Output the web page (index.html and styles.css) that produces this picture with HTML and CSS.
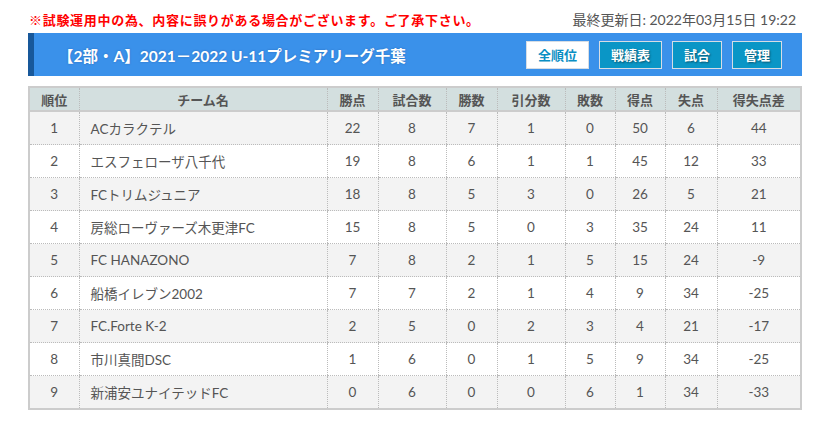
FILE: index.html
```html
<!DOCTYPE html>
<html lang="ja">
  <head>
    <meta charset="UTF-8" />
    <meta name="viewport" content="width=device-width, initial-scale=1.0" />
    <title>2021－2022 U-11プレミアリーグ千葉 順位表</title>
    <link rel="stylesheet" href="styles.css">
  </head>
  <body>
    <div class="wrap">
      <div class="topline">
        <p class="notice">※試験運用中の為、内容に誤りがある場合がございます。ご了承下さい。</p>
        <p class="updated">最終更新日: 2022年03月15日 19:22</p>
      </div>

      <div class="league-bar">
        <h1>【2部・A】2021－2022 U-11プレミアリーグ千葉</h1>
        <nav class="tabs">
          <a class="tab active" href="#">全順位</a>
          <a class="tab" href="#">戦績表</a>
          <a class="tab" href="#">試合</a>
          <a class="tab" href="#">管理</a>
        </nav>
      </div>

      <table class="standings">
        <colgroup>
          <col style="width: 50px">
          <col style="width: 248px">
          <col style="width: 51px">
          <col style="width: 68px">
          <col style="width: 51px">
          <col style="width: 68px">
          <col style="width: 50px">
          <col style="width: 50px">
          <col style="width: 52px">
          <col>
        </colgroup>
        <thead>
          <tr>
            <th>順位</th><th>チーム名</th><th>勝点</th><th>試合数</th><th>勝数</th><th>引分数</th><th>敗数</th><th>得点</th><th>失点</th><th>得失点差</th>
          </tr>
        </thead>
        <tbody>
          <tr><td>1</td><td class="team">ACカラクテル</td><td>22</td><td>8</td><td>7</td><td>1</td><td>0</td><td>50</td><td>6</td><td>44</td></tr>
          <tr><td>2</td><td class="team">エスフェローザ八千代</td><td>19</td><td>8</td><td>6</td><td>1</td><td>1</td><td>45</td><td>12</td><td>33</td></tr>
          <tr><td>3</td><td class="team">FCトリムジュニア</td><td>18</td><td>8</td><td>5</td><td>3</td><td>0</td><td>26</td><td>5</td><td>21</td></tr>
          <tr><td>4</td><td class="team">房総ローヴァーズ木更津FC</td><td>15</td><td>8</td><td>5</td><td>0</td><td>3</td><td>35</td><td>24</td><td>11</td></tr>
          <tr><td>5</td><td class="team">FC HANAZONO</td><td>7</td><td>8</td><td>2</td><td>1</td><td>5</td><td>15</td><td>24</td><td>-9</td></tr>
          <tr><td>6</td><td class="team">船橋イレブン2002</td><td>7</td><td>7</td><td>2</td><td>1</td><td>4</td><td>9</td><td>34</td><td>-25</td></tr>
          <tr><td>7</td><td class="team">FC.Forte K-2</td><td>2</td><td>5</td><td>0</td><td>2</td><td>3</td><td>4</td><td>21</td><td>-17</td></tr>
          <tr><td>8</td><td class="team">市川真間DSC</td><td>1</td><td>6</td><td>0</td><td>1</td><td>5</td><td>9</td><td>34</td><td>-25</td></tr>
          <tr><td>9</td><td class="team">新浦安ユナイテッドFC</td><td>0</td><td>6</td><td>0</td><td>0</td><td>6</td><td>1</td><td>34</td><td>-33</td></tr>
        </tbody>
      </table>
    </div>
  </body>
</html>
```

FILE: styles.css
```css
body {
  margin: 0;
  font-family: Lato, "Noto Sans CJK JP", sans-serif;
  font-size: 13px;
  color: #555;
  background-color: #fff;
}

.wrap {
  width: 774px;
  padding: 8px 0 0 28px;
}

.topline {
  display: flex;
  justify-content: space-between;
  align-items: center;
  height: 22px;
}

.topline p {
  margin: 0;
}

.notice {
  padding-left: 1px;
  color: #f00;
  font-weight: bold;
  letter-spacing: 0.7px;
}

.updated {
  padding-right: 6px;
  color: #555;
  font-size: 14px;
}

/* リーグ名の帯 */
.league-bar {
  display: flex;
  align-items: center;
  justify-content: space-between;
  height: 43px;
  margin-top: 3px;
  padding: 0 20px 0 24px;
  background-color: #3a91ea;
  border-left: 6px solid #18589a;
}

.league-bar h1 {
  margin: 0;
  color: #fff;
  font-size: 15.5px;
  font-weight: bold;
  white-space: nowrap;
  text-shadow: 0 0 2px rgba(0, 40, 100, 0.35);
}

.tabs {
  display: flex;
  gap: 10px;
}

.tab {
  display: block;
  height: 26px;
  line-height: 26px;
  padding: 0 11px;
  border: 1px solid #d6dde4;
  background-color: #0a96c6;
  color: #fff;
  font-size: 13px;
  font-weight: bold;
  text-decoration: none;
  text-shadow: 1px 1px 2px rgba(0, 0, 0, 0.45);
}

.tab.active {
  background-color: #fff;
  color: #0a8fc4;
  text-shadow: none;
}

/* 順位表 */
.standings {
  width: 774px;
  margin-top: 10px;
  border-collapse: collapse;
  table-layout: fixed;
  border: 2px solid #ccc;
}

.standings th {
  height: 22px;
  padding: 0;
  background-color: #d3dfdf;
  color: #555;
  font-weight: bold;
  font-size: 13px;
  border-left: 1px dotted #bbb;
  border-bottom: 2px solid #ccc;
  text-align: center;
}

.standings td {
  height: 32px;
  padding: 0;
  text-align: center;
  border-left: 1px dotted #bbb;
  border-bottom: 1px dotted #bbb;
  font-size: 13.5px;
}

.standings th:first-child,
.standings td:first-child {
  border-left: none;
}

.standings td.team {
  text-align: left;
  padding-left: 11px;
}

.standings tbody tr:nth-child(odd) {
  background-color: #f3f3f3;
}
```
